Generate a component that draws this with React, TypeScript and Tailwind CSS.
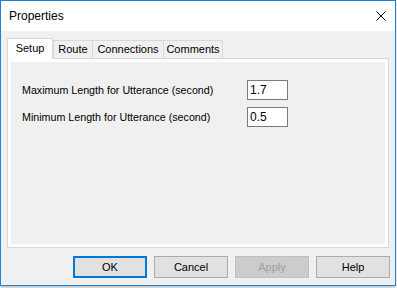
export default function App() {
  const tabs = [
    { name: 'Setup', w: 'w-[46px]' },
    { name: 'Route', w: 'w-[40px]' },
    { name: 'Connections', w: 'w-[72px]' },
    { name: 'Comments', w: 'w-[60px]' },
  ]
  const rows = [
    { label: 'Maximum Length for Utterance (second)', value: '1.7' },
    { label: 'Minimum Length for Utterance (second)', value: '0.5' },
  ]
  const buttons = ['OK', 'Cancel', 'Apply', 'Help']

  return (
    <div className="w-[397px] h-[288px] bg-white font-['Liberation_Sans',Arial,sans-serif] text-black">
      <div className="w-[396px] h-[286px] border border-[#1883d7] bg-[#f0f0f0] flex flex-col shadow-[0_2px_3px_rgba(0,0,0,0.25)]">
        {/* title bar */}
        <div className="h-[30px] bg-white flex items-center justify-between pl-[8px] pr-[9px]">
          <span className="text-[12px] leading-none">Properties</span>
          <svg width="10" height="10" viewBox="0 0 10 10" className="block">
            <path d="M0.5 0.5 L9.5 9.5 M9.5 0.5 L0.5 9.5" stroke="#000" strokeWidth="1" fill="none" />
          </svg>
        </div>

        {/* tabs */}
        <div className="pt-[7px] pl-[6px] h-[27px] flex items-end text-[11px] leading-none">
          {tabs.map((t, i) => (
            <div
              key={t.name}
              className={
                i === 0
                  ? `${t.w} h-[21px] -mb-px relative z-10 bg-white border border-b-0 border-[#d9d9d9] flex items-center justify-center pb-[2px]`
                  : `${t.w} h-[18px] ${i > 1 ? '-ml-px' : ''} border border-b-0 border-[#d9d9d9] bg-[#f0f0f0] flex items-center justify-center`
              }
            >
              {t.name}
            </div>
          ))}
        </div>

        {/* panel */}
        <div className="ml-[6px] w-[382px] h-[190px] border border-[#d9d9d9] bg-white p-[3px]">
          <div className="h-full bg-[#f0f0f0] pt-[18px] pl-[11px] flex flex-col gap-[7px]">
            {rows.map((r) => (
              <div key={r.label} className="flex items-center">
                <span className="w-[225px] text-[10.7px] leading-none">{r.label}</span>
                <div className="w-[41px] h-[20px] border border-[#7a7a7a] bg-white flex items-center pl-[2px] text-[12px] leading-none">
                  {r.value}
                </div>
              </div>
            ))}
          </div>
        </div>

        {/* buttons */}
        <div className="mt-[8px] pr-[5px] flex justify-end gap-[7px] text-[11px]">
          {buttons.map((b) => (
            <div
              key={b}
              className={
                b === 'OK'
                  ? 'w-[74px] h-[22px] border-2 border-[#0078d7] bg-[#e1e1e1] flex items-center justify-center'
                  : b === 'Apply'
                  ? 'w-[74px] h-[22px] border border-[#bfbfbf] bg-[#cccccc] text-[#a0a0a0] flex items-center justify-center'
                  : 'w-[74px] h-[22px] border border-[#adadad] bg-[#e1e1e1] flex items-center justify-center'
              }
            >
              {b}
            </div>
          ))}
        </div>
      </div>
    </div>
  )
}
